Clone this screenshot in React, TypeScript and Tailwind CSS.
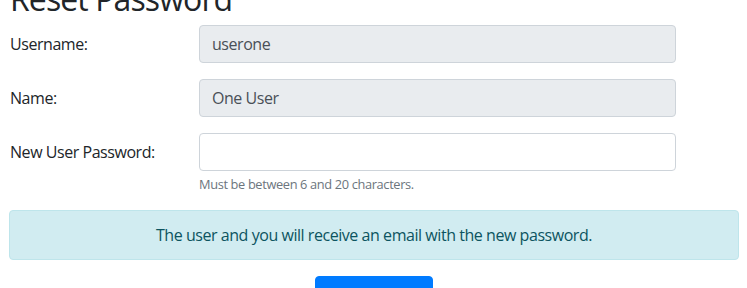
export default function App() {
  return (
    <div className="h-[288px] overflow-hidden bg-white font-['Open_Sans','Noto_Sans',sans-serif] text-[16px] leading-6 tracking-[-0.45px] text-[#212529]">
      <div className="w-[730px] ml-[9px] -mt-[20px]">
        <h2 className="text-[32px] leading-[38.4px] font-medium tracking-[-0.9px] mb-[7px] pl-[1px]">Reset Password</h2>

        <form>
          <div className="flex mb-4">
            <label className="w-[190px] pt-[7px] pb-[7px] pl-[1px]">Username:</label>
            <input
              disabled
              value="userone"
              className="w-[477px] h-[38px] px-3 rounded border border-[#ced4da] bg-[#e9ecef] text-[#495057]"
            />
          </div>

          <div className="flex mb-4">
            <label className="w-[190px] pt-[7px] pb-[7px] pl-[1px]">Name:</label>
            <input
              disabled
              value="One User"
              className="w-[477px] h-[38px] px-3 rounded border border-[#ced4da] bg-[#e9ecef] text-[#495057]"
            />
          </div>

          <div className="flex mb-[15px]">
            <label className="w-[190px] pt-[7px] pb-[7px] pl-[1px]">New User Password:</label>
            <div className="w-[477px]">
              <input
                type="password"
                className="w-full h-[38px] px-3 rounded border border-[#ced4da] bg-white text-[#495057]"
              />
              <small className="block mt-1 text-[12.8px] leading-[19.2px] tracking-[-0.35px] text-[#6c757d]">
                Must be between 6 and 20 characters.
              </small>
            </div>
          </div>

          <div className="mb-4 py-3 px-5 rounded border border-[#bee5eb] bg-[#d1ecf1] text-[#0c5460] text-center">
            The user and you will receive an email with the new password.
          </div>

          <div className="flex justify-center">
            <button
              type="button"
              className="w-[118px] h-[38px] rounded border border-[#007bff] bg-[#007bff] text-white"
            >
              Reset
            </button>
          </div>
        </form>
      </div>
    </div>
  );
}
